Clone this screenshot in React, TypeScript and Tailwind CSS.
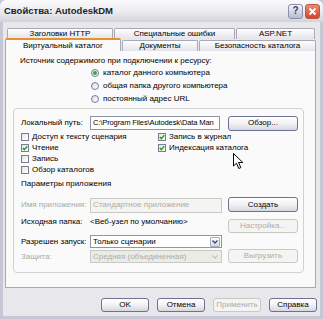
import React from "react";

function Btn({ label, disabled, w = "w-[70px]", h = "h-[15px]" }: { label: string; disabled?: boolean; w?: string; h?: string }) {
  return (
    <div
      className={
        "flex items-center justify-center rounded-[3px] border text-[8px] " +
        w +
        " " +
        h +
        (disabled
          ? " border-[#c9c8c2] bg-[#f4f4f2] text-[#aeada8]"
          : " border-[#6f7191] bg-linear-to-b from-white via-[#f2f2f5] to-[#d6d6df] text-black")
      }
    >
      {label}
    </div>
  );
}

function Check({ checked, label }: { checked?: boolean; label: string }) {
  return (
    <div className="flex h-[11px] items-center gap-[3px]">
      <div className="flex h-[8px] w-[8px] items-center justify-center border border-[#7a7e90] bg-linear-to-br from-[#e4e4e4] to-white">
        {checked && (
          <svg width="6" height="6" viewBox="0 0 6 6">
            <path d="M0.8 3 L2.3 4.6 L5.3 1.2" stroke="#21a121" strokeWidth="1.4" fill="none" />
          </svg>
        )}
      </div>
      <span>{label}</span>
    </div>
  );
}

function Radio({ checked, label }: { checked?: boolean; label: string }) {
  return (
    <div className="flex h-[13px] items-center gap-[4px]">
      <div className="flex h-[8px] w-[8px] items-center justify-center rounded-full border border-[#6f7fa0] bg-linear-to-br from-[#dcdcdc] to-white">
        {checked && <div className="h-[4px] w-[4px] rounded-full bg-[#2db22d]" />}
      </div>
      <span>{label}</span>
    </div>
  );
}

function Tab({ label, w, active }: { label: string; w: string; active?: boolean }) {
  return (
    <div
      className={
        "flex items-center justify-center rounded-t-[2px] border border-b-0 text-[8px] " +
        w +
        (active
          ? " h-[13px] border-[#a9a9b5] border-t-2 border-t-[#e8922f] bg-[#fafafa]"
          : " h-[11px] border-[#a9a9b5] bg-linear-to-b from-white to-[#e3e3ea]")
      }
    >
      {label}
    </div>
  );
}

export default function App() {
  return (
    <div className="relative flex h-[319px] w-[323px] flex-col overflow-hidden bg-[#c6c6d4] font-['Liberation_Sans',Arial,sans-serif] text-[8px] leading-[10px] text-black">
      {/* title bar */}
      <div className="flex h-[22px] shrink-0 items-center justify-between rounded-t-[6px] bg-linear-to-b from-[#fbfbfd] via-[#ececf1] to-[#d3d3dd] pl-[4px] pr-[3px]">
        <span className="text-[9.5px] font-bold text-[#1e1e24]">Свойства: AutodeskDM</span>
        <div className="flex gap-[2px]">
          <div className="flex h-[15px] w-[15px] items-center justify-center rounded-[3px] border border-[#8b8ea8] bg-linear-to-b from-[#f4f4fa] to-[#b8bccf] text-[10px] font-bold text-[#3a3f5c]">
            ?
          </div>
          <div className="flex h-[15px] w-[15px] items-center justify-center rounded-[3px] border border-[#b65a4b] bg-linear-to-b from-[#f08a6e] to-[#d6412a]">
            <svg width="9" height="9" viewBox="0 0 9 9">
              <path d="M1.5 1.5 L7.5 7.5 M7.5 1.5 L1.5 7.5" stroke="white" strokeWidth="1.8" />
            </svg>
          </div>
        </div>
      </div>

      {/* body */}
      <div className="flex flex-1 flex-col border-x-[3px] border-b-[3px] border-[#c6c6d4] bg-[#e8e8ec] pl-[2px] pt-[6px]">
        <div className="ml-[2px] flex gap-[1px]">
          <Tab label="Заголовки HTTP" w="w-[106px]" />
          <Tab label="Специальные ошибки" w="w-[121px]" />
          <Tab label="ASP.NET" w="w-[79px]" />
        </div>
        <div className="-mt-[1px] flex items-end gap-[1px]">
          <Tab label="Виртуальный каталог" w="w-[116px]" active />
          <Tab label="Документы" w="w-[76px]" />
          <Tab label="Безопасность каталога" w="w-[117px]" />
        </div>

        <div className="flex h-[237px] w-[311px] flex-col border border-t-0 border-[#a9a9b5] bg-[#fafafa] pt-[5px]">
          <div className="pl-[14px]">Источник содержимого при подключении к ресурсу:</div>
          <div className="flex flex-col pl-[85px]">
            <Radio checked label="каталог данного компьютера" />
            <Radio label="общая папка другого компьютера" />
            <Radio label="постоянный адрес URL" />
          </div>

          <div className="ml-[7px] mt-[3px] flex h-[165px] w-[291px] flex-col rounded-[4px] border border-[#d2d2cc] pl-[7px] pt-[6px]">
            <div className="flex h-[16px] items-center">
              <span className="w-[69px]">Локальный путь:</span>
              <div className="flex h-[14px] w-[130px] items-center overflow-hidden whitespace-nowrap border border-[#8e95aa] bg-white pl-[2px] text-[7.6px] tracking-[-0.15px]">
                C:\Program Files\Autodesk\Data Man
              </div>
              <div className="ml-[8px]">
                <Btn label="Обзор..." />
              </div>
            </div>
            <div className="flex">
              <div className="flex w-[137px] flex-col">
                <Check label="Доступ к тексту сценария" />
                <Check checked label="Чтение" />
                <Check label="Запись" />
                <Check label="Обзор каталогов" />
              </div>
              <div className="flex flex-col">
                <Check checked label="Запись в журнал" />
                <Check checked label="Индексация каталога" />
              </div>
            </div>
            <div className="mt-[4px]">Параметры приложения</div>
            <div className="mt-[8px] flex">
              <div className="flex w-[201px] flex-col">
                <div className="flex h-[16px] items-center">
                  <span className="w-[69px] text-[#a8a8a4]">Имя приложения:</span>
                  <div className="flex h-[15px] w-[132px] items-center border border-[#c9c8c2] bg-[#f4f4f2] pl-[2px] text-[#aeada8]">
                    Стандартное приложение
                  </div>
                </div>
                <div className="mt-[4px] flex h-[10px] items-center">
                  <span className="w-[69px]">Исходная папка:</span>
                  <span>&lt;Веб-узел по умолчанию&gt;</span>
                </div>
                <div className="mt-[8px] flex h-[13px] items-center">
                  <span className="w-[69px]">Разрешен запуск:</span>
                  <div className="flex h-[13px] w-[132px] items-center justify-between border border-[#8e95aa] bg-white pl-[2px]">
                    <span>Только сценарии</span>
                    <div className="mr-[1px] flex h-[10px] w-[10px] items-center justify-center rounded-[1px] border border-[#a6acc3] bg-linear-to-b from-white to-[#d4d8e6]">
                      <svg width="6" height="4" viewBox="0 0 6 4">
                        <path d="M0.5 0.5 L3 3 L5.5 0.5" stroke="#3d4460" strokeWidth="1.3" fill="none" />
                      </svg>
                    </div>
                  </div>
                </div>
                <div className="mt-[2px] flex h-[13px] items-center">
                  <span className="w-[69px] text-[#a8a8a4]">Защита:</span>
                  <div className="flex h-[13px] w-[132px] items-center justify-between border border-[#c9c8c2] bg-[#ebebe8] pl-[2px] text-[#aeada8]">
                    <span>Средняя (объединенная)</span>
                    <div className="mr-[1px] flex h-[10px] w-[10px] items-center justify-center">
                      <svg width="6" height="4" viewBox="0 0 6 4">
                        <path d="M0.5 0.5 L3 3 L5.5 0.5" stroke="#c4c4c0" strokeWidth="1.3" fill="none" />
                      </svg>
                    </div>
                  </div>
                </div>
              </div>
              <div className="ml-[6px] flex flex-col">
                <Btn label="Создать" />
                <div className="mt-[7px]">
                  <Btn label="Настройка..." disabled h="h-[14px]" />
                </div>
                <div className="mt-[16px]">
                  <Btn label="Выгрузить" disabled h="h-[14px]" />
                </div>
              </div>
            </div>
          </div>
        </div>

        <div className="mt-[10px] flex w-[312px] justify-end gap-[8px]">
          <Btn label="OK" w="w-[48px]" h="h-[14px]" />
          <Btn label="Отмена" w="w-[48px]" h="h-[14px]" />
          <Btn label="Применить" w="w-[48px]" h="h-[14px]" disabled />
          <Btn label="Справка" w="w-[48px]" h="h-[14px]" />
        </div>
      </div>

      {/* mouse pointer */}
      <svg className="absolute left-[233px] top-[153px]" width="11" height="17" viewBox="0 0 11 17">
        <path d="M0.5 0.5 L0.5 13 L3.5 10.2 L5.8 15.5 L7.8 14.6 L5.6 9.5 L9.8 9.5 Z" fill="white" stroke="black" strokeWidth="1" />
      </svg>
    </div>
  );
}
